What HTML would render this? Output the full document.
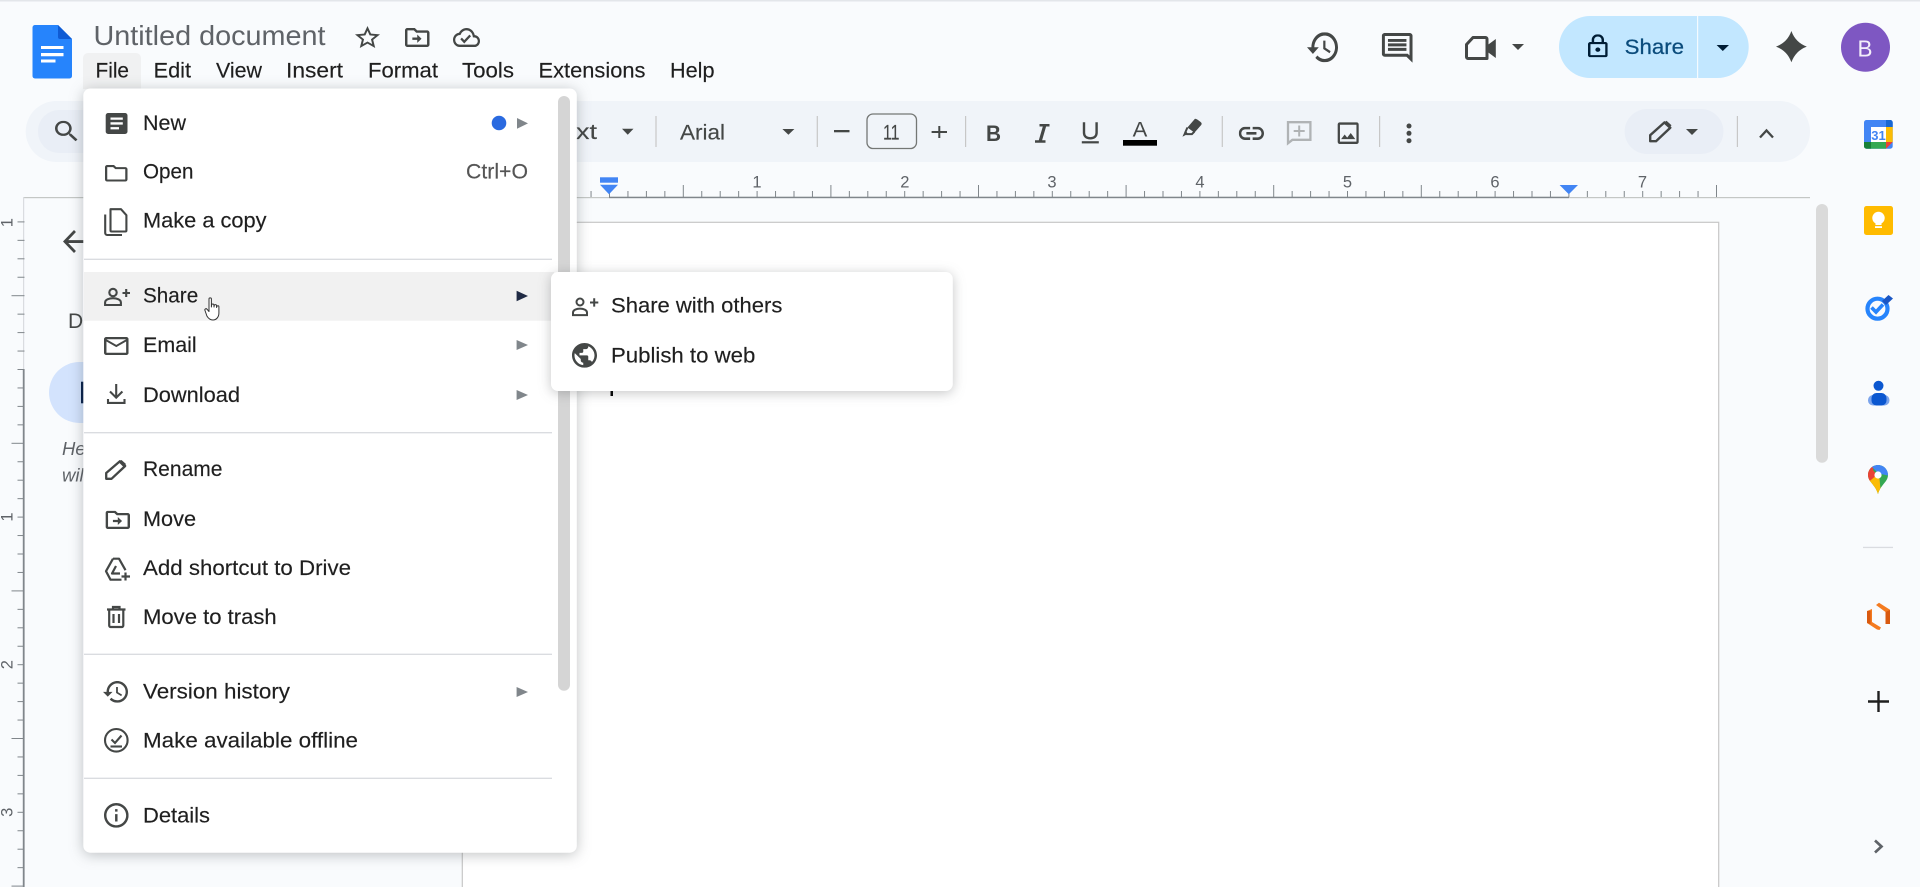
<!DOCTYPE html>
<html lang="en">
<head>
<meta charset="utf-8">
<title>Untitled document</title>
<style>
html,body{margin:0;padding:0;width:1920px;height:887px;overflow:hidden;background:#f9fbfd}
svg{display:block}
#root{filter:blur(.3px)}
text{font-family:"Liberation Sans",Arial,sans-serif;fill:#1f1f1f}
.m{font-size:21px;stroke:#1f1f1f;stroke-width:.15px}
.tb{font-size:21px;fill:#444746;stroke:#444746;stroke-width:.15px}
.r{font-size:16.5px;fill:#5f6368;text-anchor:middle}
.sep{stroke:#c7c7c7;stroke-width:1.2}
.hr{stroke:#dadce0;stroke-width:1.3}
</style>
</head>
<body>
<svg id="root" xmlns="http://www.w3.org/2000/svg" width="1920" height="887" viewBox="0 0 1920 887">
<defs>
<pattern id="hticks" patternUnits="userSpaceOnUse" x="609" y="185" width="147.6" height="12">
<path fill="#80868b" d="M0 6h1v6H0zM18.45 6h1v6h-1zM36.9 6h1v6h-1zM55.35 6h1v6h-1zM73.8 0h1v12h-1zM92.25 6h1v6h-1zM110.7 6h1v6h-1zM129.15 6h1v6h-1z"/>
</pattern>
<pattern id="vticks" patternUnits="userSpaceOnUse" x="11.5" y="369" width="13" height="147.6">
<path fill="#80868b" d="M6 0h7v1H6zM6 18.45h7v1H6zM6 36.9h7v1H6zM6 55.35h7v1H6zM0 73.8h13v1H0zM6 92.25h7v1H6zM6 110.7h7v1H6zM6 129.15h7v1H6z"/>
</pattern>
<clipPath id="pin"><path d="M1878 465c-5.5 0-10 4.4-10 10 0 7 7 9 10 19 3-10 10-12 10-19 0-5.6-4.5-10-10-10z"/></clipPath>
</defs>

<!-- base -->
<rect width="1920" height="887" fill="#f9fbfd"/>
<rect width="1920" height="1.5" fill="#e3e6ea"/>

<!-- docs logo -->
<path fill="#2684fc" d="M35 25h23l14 14v37a2.5 2.5 0 0 1-2.5 2.5H35a2.500 2.500 0 0 1-2.500-2.500V27.500A2.500 2.500 0 0 1 35 25z"/>
<path fill="#0f5bd4" d="M58 25l14 14H60a2 2 0 0 1-2-2z"/>
<path fill="#fff" d="M41 46h22.500v3H41zM41 53h22.500v3.300H41zM41 59.500h14.500v3H41z"/>

<!-- title row -->
<text x="93.500" y="45" font-size="28" style="fill:#5f6368" textLength="232" lengthAdjust="spacingAndGlyphs">Untitled document</text>
<svg x="355" y="26" width="25" height="22" viewBox="2 2 20 19" preserveAspectRatio="none"><path fill="#444746" d="M22 9.240l-7.190-.620L12 2 9.190 8.630 2 9.240l5.460 4.730L5.820 21 12 17.270 18.180 21l-1.630-7.030L22 9.240zM12 15.400l-3.760 2.270 1-4.280-3.320-2.880 4.380-.380L12 6.100l1.710 4.040 4.380.380-3.320 2.880 1 4.280L12 15.400z"/></svg>
<svg x="405" y="28" width="24.500" height="19" viewBox="2 4 20 16" preserveAspectRatio="none"><path fill="#444746" d="M20 6h-8l-2-2H4c-1.100 0-2 .900-2 2v12c0 1.100.900 2 2 2h16c1.100 0 2-.900 2-2V8c0-1.100-.900-2-2-2zm0 12H4V6h5.170l2 2H20v10zm-8-4H8v-2h4v-2.500l3.500 3.500-3.500 3.500V14z"/></svg>
<svg x="453" y="28" width="27" height="19" viewBox="0 4 24 16" preserveAspectRatio="none"><path fill="#444746" d="M19.350 10.040C18.670 6.590 15.640 4 12 4 9.110 4 6.600 5.640 5.350 8.040 2.340 8.360 0 10.910 0 14c0 3.310 2.690 6 6 6h13c2.760 0 5-2.240 5-5 0-2.640-2.050-4.780-4.650-4.960zM19 18H6c-2.210 0-4-1.790-4-4 0-2.050 1.530-3.760 3.560-3.970l1.070-.110.500-.950C8.080 7.140 9.940 6 12 6c2.620 0 4.880 1.860 5.390 4.430l.300 1.500 1.530.110c1.560.100 2.780 1.410 2.780 2.960 0 1.650-1.350 3-3 3zm-9-3.820l-2.090-2.090L6.500 13.500 10 17l6.010-6.010-1.410-1.410z"/></svg>

<!-- menubar -->
<path fill="#f0f1f2" d="M83 89V58a5 5 0 0 1 5-5h48a5 5 0 0 1 5 5v31z"/>
<text class="m" x="95.500" y="77.500" textLength="33.500" lengthAdjust="spacingAndGlyphs">File</text>
<text class="m" x="153.600" y="77.500" textLength="37.400" lengthAdjust="spacingAndGlyphs">Edit</text>
<text class="m" x="216" y="77.500" textLength="46" lengthAdjust="spacingAndGlyphs">View</text>
<text class="m" x="286" y="77.500" textLength="57" lengthAdjust="spacingAndGlyphs">Insert</text>
<text class="m" x="368" y="77.500" textLength="70" lengthAdjust="spacingAndGlyphs">Format</text>
<text class="m" x="462" y="77.500" textLength="52" lengthAdjust="spacingAndGlyphs">Tools</text>
<text class="m" x="538.500" y="77.500" textLength="107" lengthAdjust="spacingAndGlyphs">Extensions</text>
<text class="m" x="670" y="77.500" textLength="44.500" lengthAdjust="spacingAndGlyphs">Help</text>

<!-- top-right actions -->
<svg x="1307" y="32.300" width="31" height="30" viewBox="1 3 21 18" preserveAspectRatio="none"><path fill="#444746" d="M13 3c-4.970 0-9 4.030-9 9H1l3.890 3.890.070.140L9 12H6c0-3.870 3.130-7 7-7s7 3.130 7 7-3.130 7-7 7c-1.930 0-3.680-.790-4.940-2.060l-1.420 1.420C8.270 19.990 10.510 21 13 21c4.970 0 9-4.030 9-9s-4.030-9-9-9zm-1 5v5l4.280 2.540.720-1.210-3.500-2.080V8H12z"/></svg>
<svg x="1381.800" y="33" width="30.800" height="29.700" viewBox="2 2 20 20" preserveAspectRatio="none"><path fill="#444746" d="M21.990 4c0-1.100-.890-2-1.990-2H4c-1.100 0-2 .900-2 2v12c0 1.100.900 2 2 2h14l4 4-.010-18zM20 4v13.170L18.830 16H4V4h16zM6 12h12v2H6zm0-3h12v2H6zm0-3h12v2H6z"/></svg>
<path fill="none" stroke="#444746" stroke-width="3" stroke-linejoin="round" d="M1466.500 44.500l6.500-7h12.500a1.500 1.500 0 0 1 1.500 1.500v19.500h-19a1.500 1.500 0 0 1-1.500-1.500z"/>
<path fill="#444746" d="M1487 45.500l8.800-6.500v19l-8.800-6.500z"/>
<path fill="#444746" d="M1512 44h12l-6 6z"/>

<rect x="1559" y="16" width="189.700" height="62" rx="31" fill="#c2e7ff"/>
<rect x="1697" y="16" width="1.200" height="62" fill="#f4fbff"/>
<svg x="1588" y="34.300" width="19.700" height="23" viewBox="4 1 16 21" preserveAspectRatio="none"><path fill="#001d35" d="M18 8h-1V6c0-2.760-2.240-5-5-5S7 3.240 7 6v2H6c-1.100 0-2 .900-2 2v10c0 1.100.900 2 2 2h12c1.100 0 2-.900 2-2V10c0-1.100-.900-2-2-2zM9 6c0-1.660 1.340-3 3-3s3 1.340 3 3v2H9V6zm9 14H6V10h12v10zm-6-3c1.100 0 2-.900 2-2s-.900-2-2-2-2 .900-2 2 .900 2 2 2z"/></svg>
<text x="1624.600" y="54" font-size="21" style="fill:#0b4c7c;stroke:#0b4c7c;stroke-width:.25px" textLength="59.400" lengthAdjust="spacingAndGlyphs">Share</text>
<path fill="#001d35" d="M1716.600 45h12.400l-6.200 6z"/>
<path fill="#444746" d="M1791.400 31Q1795.500 42.500 1806.800 46.600Q1795.500 50.800 1791.400 62.300Q1787.300 50.800 1776 46.600Q1787.300 42.500 1791.400 31z"/>
<circle cx="1865.500" cy="47.300" r="24.500" fill="#7e57c2"/>
<text x="1857.500" y="56.300" font-size="23.500" style="fill:#f3eefa" textLength="15" lengthAdjust="spacingAndGlyphs">B</text>

<!-- toolbar -->
<rect x="25.700" y="101" width="1784.300" height="61" rx="30.500" fill="#f0f4f9"/>
<rect x="38" y="110" width="120" height="43" rx="21" fill="#e9eef6"/>
<svg x="55" y="120.700" width="22.500" height="20.500" viewBox="3 3 17.500 17.500" preserveAspectRatio="none"><path fill="#444746" d="M15.500 14h-.790l-.280-.270C15.410 12.590 16 11.110 16 9.500 16 5.910 13.090 3 9.500 3S3 5.910 3 9.500 5.910 16 9.500 16c1.610 0 3.090-.590 4.230-1.570l.270.280v.790l5 4.990L20.490 19l-4.990-5zm-6 0C7.010 14 5 11.990 5 9.500S7.010 5 9.500 5 14 7.010 14 9.500 11.990 14 9.500 14z"/></svg>
<text class="tb" x="573" y="139" text-anchor="end">Normal te</text>
<text class="tb" x="576" y="139" textLength="21" lengthAdjust="spacingAndGlyphs">xt</text>
<path fill="#444746" d="M622 128.700h11.500l-5.750 6z"/>
<line class="sep" x1="656" y1="116" x2="656" y2="147"/>
<text class="tb" x="680" y="139.300" textLength="45" lengthAdjust="spacingAndGlyphs">Arial</text>
<path fill="#444746" d="M782.400 129h12l-6 5.700z"/>
<line class="sep" x1="817.300" y1="116" x2="817.300" y2="147"/>
<rect x="834" y="130" width="15.500" height="2.300" fill="#444746"/>
<rect x="867" y="114" width="49.500" height="34.500" rx="6" fill="none" stroke="#747775" stroke-width="1.300"/>
<text class="tb" x="883" y="139.300" textLength="16.500" lengthAdjust="spacingAndGlyphs">11</text>
<path fill="#444746" d="M931.600 131h6.700v-5h2v5h6.700v2h-6.700v5h-2v-5h-6.700z"/>
<line class="sep" x1="965.600" y1="116" x2="965.600" y2="147"/>
<text x="986" y="141" font-size="22.500" font-weight="bold" style="fill:#444746" textLength="15" lengthAdjust="spacingAndGlyphs">B</text>
<path fill="#444746" d="M1039.500 124h10v2.500h-3.400l-4 13.700h3.400v2.500h-10.500v-2.500h3.800l4-13.700h-3.300z"/>
<path fill="none" stroke="#444746" stroke-width="2.400" d="M1084 122.300v10.500c0 3.500 2.400 5.500 6.300 5.500s6.300-2 6.300-5.500v-10.500"/>
<rect x="1081.800" y="141.200" width="17" height="2.200" fill="#444746"/>
<text x="1132.700" y="136.700" font-size="21" style="fill:#444746" textLength="14.700" lengthAdjust="spacingAndGlyphs">A</text>
<rect x="1123" y="140" width="34" height="5.700" fill="#000"/>
<svg x="1181.400" y="118.300" width="21.100" height="18.400" viewBox="0 0 21 18" preserveAspectRatio="none"><path fill="none" stroke="#444746" stroke-width="2" d="M6 9L4 13.500 5.500 15.500H10.500L13 13"/><path fill="#444746" d="M13.500 0.500c1 0 2 .6 3 1.200l2.500 1.800c1.200.9 1.500 2 .7 3.100L13 14 6 9zM1 18l2-4.500 3 2z"/></svg>
<line class="sep" x1="1222.300" y1="116" x2="1222.300" y2="147"/>
<svg x="1238.800" y="126.700" width="25.200" height="13.300" viewBox="2 7 20 10" preserveAspectRatio="none"><path fill="#444746" d="M17 7h-4v2h4c1.650 0 3 1.350 3 3s-1.350 3-3 3h-4v2h4c2.760 0 5-2.240 5-5s-2.240-5-5-5zm-6 8H7c-1.650 0-3-1.350-3-3s1.350-3 3-3h4V7H7c-2.760 0-5 2.240-5 5s2.240 5 5 5h4v-2zm-3-4h8v2H8z"/></svg>
<path fill="none" stroke="#b0b3b5" stroke-width="2.300" d="M1288 122.200h22.400v17.600h-18l-4.400 3.500z"/>
<path fill="#b0b3b5" d="M1298.200 125.500h2v4.500h4.500v2h-4.500v4.500h-2v-4.500h-4.500v-2h4.500z"/>
<svg x="1337.600" y="122.300" width="21.200" height="21.700" viewBox="3 3 18 18" preserveAspectRatio="none"><path fill="#444746" d="M19 5v14H5V5h14m0-2H5c-1.100 0-2 .900-2 2v14c0 1.100.900 2 2 2h14c1.100 0 2-.900 2-2V5c0-1.100-.900-2-2-2zm-4.860 8.860l-3 3.870L9 13.140 6 17h12l-3.860-5.140z"/></svg>
<line class="sep" x1="1379.600" y1="116" x2="1379.600" y2="147"/>
<circle cx="1409" cy="126" r="2.500" fill="#444746"/><circle cx="1409" cy="133.300" r="2.500" fill="#444746"/><circle cx="1409" cy="140.700" r="2.500" fill="#444746"/>
<rect x="1624.600" y="109" width="98.900" height="45" rx="22.500" fill="#e9eef6"/>
<g fill="none" stroke="#444746" stroke-width="2.400" stroke-linejoin="round"><path d="M1650.200 141.200v-6l14.300-12.800 5.800 5.300-14.300 13.500z"/></g>
<path fill="#444746" d="M1663.500 123.300l3-2.500 5 4.500-2.500 3z"/>
<path fill="#444746" d="M1686 129h12l-6 6z"/>
<line class="sep" x1="1737.400" y1="116" x2="1737.400" y2="147"/>
<path fill="none" stroke="#444746" stroke-width="2.300" d="M1760 137.500l6.500-7 6.500 7"/>

<!-- horizontal ruler -->
<rect x="23" y="197" width="586" height="1.200" fill="#c4c7c5"/>
<rect x="609" y="196.700" width="960" height="1.500" fill="#80868b"/>
<rect x="1569" y="197" width="241" height="1.200" fill="#c4c7c5"/>
<rect x="590" y="185" width="1128" height="12" fill="url(#hticks)"/>
<text class="r" x="757" y="187.300">1</text>
<text class="r" x="904.800" y="187.300">2</text>
<text class="r" x="1052" y="187.300">3</text>
<text class="r" x="1200" y="187.300">4</text>
<text class="r" x="1347.500" y="187.300">5</text>
<text class="r" x="1495" y="187.300">6</text>
<text class="r" x="1642.500" y="187.300">7</text>
<rect x="600" y="177.300" width="18" height="5.400" fill="#4285f4"/>
<path fill="#4285f4" d="M600 184.700h18l-9 9.600z"/>
<path fill="#4285f4" d="M1559.600 185H1578l-9.200 9.300z"/>

<!-- page -->
<rect x="462.300" y="222.300" width="1256.400" height="670" fill="#fff" stroke="#c7c7c7" stroke-width="1.200"/>
<rect x="610.500" y="372" width="2.500" height="24" fill="#000"/>

<!-- vertical ruler -->
<rect x="23" y="197" width="1.200" height="172.500" fill="#dadce0"/>
<rect x="22.800" y="369" width="1.800" height="518" fill="#80868b"/>
<rect x="11.500" y="221" width="13" height="666" fill="url(#vticks)"/>
<text class="r" transform="translate(12.500 222.700) rotate(-90)" y="0">1</text>
<text class="r" transform="translate(12.500 517) rotate(-90)" y="0">1</text>
<text class="r" transform="translate(12.500 664.700) rotate(-90)" y="0">2</text>
<text class="r" transform="translate(12.500 812.300) rotate(-90)" y="0">3</text>

<!-- left pane, mostly behind menu -->
<svg x="63" y="230" width="22" height="23" viewBox="4 4 16 16" preserveAspectRatio="none"><path fill="#444746" d="M20 11H7.830l5.590-5.590L12 4l-8 8 8 8 1.410-1.410L7.830 13H20v-2z"/></svg>
<text x="68" y="328" font-size="21" style="fill:#444746">Document tabs</text>
<rect x="49" y="362" width="300" height="61" rx="30.500" fill="#d3e3fd"/>
<rect x="81" y="381.700" width="4" height="21.600" fill="#041e49"/>
<text x="62" y="455" font-size="18.500" font-style="italic" style="fill:#5f6368">Headings you add</text>
<text x="62" y="481.700" font-size="18.500" font-style="italic" style="fill:#5f6368">will appear here.</text>

<!-- right scrollbar & side panel -->
<rect x="1816" y="204" width="12" height="258.700" rx="6" fill="#dadada"/>
<rect x="1864" y="120" width="28.700" height="28.700" rx="2.500" fill="#4285f4"/>
<path fill="#1967d2" d="M1886 120h4.200a2.500 2.500 0 0 1 2.500 2.500V127H1886z"/>
<rect x="1886" y="127" width="6.700" height="15" fill="#fbbc04"/>
<rect x="1871" y="142" width="15" height="6.700" fill="#34a853"/>
<path fill="#188038" d="M1864 142h7v6.700h-4.500a2.500 2.500 0 0 1-2.500-2.500z"/>
<path fill="#ea4335" d="M1886 148.700V142h6.700z"/>
<rect x="1871" y="127" width="15" height="15" fill="#fff"/>
<text x="1878.500" y="140" font-size="13" font-weight="bold" text-anchor="middle" style="fill:#4285f4">31</text>
<rect x="1864" y="206" width="29" height="29" rx="2.500" fill="#ffbb00"/>
<circle cx="1878.500" cy="218" r="6.200" fill="#fff"/>
<rect x="1875.500" y="222" width="6" height="3" fill="#fff"/>
<rect x="1875" y="226.200" width="7" height="1.800" fill="#fff"/>
<circle cx="1877.500" cy="308.700" r="10" fill="none" stroke="#2684fc" stroke-width="4.200"/>
<path fill="none" stroke="#2684fc" stroke-width="3.600" d="M1871.500 307.500l4.500 4.500 7-7.500"/>
<path fill="#1a56c4" d="M1882 301l6.500-6 4.500 3.500-7 6.500z"/>
<rect x="1868" y="395" width="21.500" height="10.500" rx="5" fill="#7ba4ec"/>
<rect x="1871.500" y="393" width="15" height="12.500" rx="5" fill="#0b57d0"/>
<circle cx="1878.500" cy="385.800" r="5" fill="#0b57d0"/>
<g clip-path="url(#pin)">
<rect x="1868" y="465" width="20" height="30" fill="#34a853"/>
<path fill="#fbbc04" d="M1868 480l11-7 2 22h-13z"/>
<path fill="#ea4335" d="M1866 465h8l-1 5 4 5-11 9z"/>
<path fill="#4285f4" d="M1870 465h20v11l-9-2-4-2z"/>
</g>
<circle cx="1878" cy="475" r="3.600" fill="#fff"/>
<rect x="1863" y="546.800" width="30" height="1.300" fill="#dadce0"/>
<path fill="#f47b20" d="M1876 605l3-2.300 11 7v14h-4.500v-11.700z"/>
<path fill="#d9590f" d="M1885.500 612v12h4.500v-14z"/>
<path fill="#f47b20" d="M1867 611l5-2v13l9 5.500-1.500 2.500-2.500-.500-10-6.500z"/>
<path fill="#d9590f" d="M1867 611h3.500v13l-3.500-1z"/>
<path fill="#1f1f1f" d="M1868 700.300h9.300V691h2.400v9.300h9.300v2.400h-9.300v9.300h-2.400v-9.300h-9.300z"/>
<path fill="none" stroke="#5f6368" stroke-width="2.700" d="M1875 840.500l6.500 6-6.500 6"/>

<!-- file menu -->
<rect x="83.300" y="88.500" width="493.500" height="764.200" rx="7" fill="#fff" style="filter:drop-shadow(0 2px 7px rgba(60,64,67,.32))"/>
<rect x="558" y="96" width="12" height="594.700" rx="6" fill="#d5d5d5"/>
<rect x="84" y="272" width="470" height="48.700" fill="#f1f1f1"/>
<line class="hr" x1="84" y1="259.300" x2="552" y2="259.300"/>
<line class="hr" x1="84" y1="432.700" x2="552" y2="432.700"/>
<line class="hr" x1="84" y1="654.300" x2="552" y2="654.300"/>
<line class="hr" x1="84" y1="778.300" x2="552" y2="778.300"/>

<text class="m" x="143" y="130" textLength="43" lengthAdjust="spacingAndGlyphs">New</text>
<text class="m" x="143" y="178.700" textLength="50.400" lengthAdjust="spacingAndGlyphs">Open</text>
<text class="m" x="466" y="178.700" textLength="62" lengthAdjust="spacingAndGlyphs" style="fill:#555;stroke:#555">Ctrl+O</text>
<text class="m" x="143" y="227.700" textLength="123.500" lengthAdjust="spacingAndGlyphs">Make a copy</text>
<text class="m" x="143" y="302.700" textLength="55.200" lengthAdjust="spacingAndGlyphs">Share</text>
<text class="m" x="143" y="352" textLength="53.700" lengthAdjust="spacingAndGlyphs">Email</text>
<text class="m" x="143" y="402" textLength="97" lengthAdjust="spacingAndGlyphs">Download</text>
<text class="m" x="143" y="476" textLength="79.500" lengthAdjust="spacingAndGlyphs">Rename</text>
<text class="m" x="143" y="526" textLength="53" lengthAdjust="spacingAndGlyphs">Move</text>
<text class="m" x="143" y="575" textLength="208" lengthAdjust="spacingAndGlyphs">Add shortcut to Drive</text>
<text class="m" x="143" y="624" textLength="133.700" lengthAdjust="spacingAndGlyphs">Move to trash</text>
<text class="m" x="143" y="698.300" textLength="147" lengthAdjust="spacingAndGlyphs">Version history</text>
<text class="m" x="143" y="747.700" textLength="215" lengthAdjust="spacingAndGlyphs">Make available offline</text>
<text class="m" x="143" y="822.700" textLength="67" lengthAdjust="spacingAndGlyphs">Details</text>

<!-- menu arrows -->
<circle cx="499" cy="123" r="7.300" fill="#2a6ae0"/>
<path fill="#80868b" d="M517 118v10.700l11-5.350z"/>
<path fill="#1f2a44" d="M516.600 290.700v10.600l11.400-5.300z"/>
<path fill="#80868b" d="M516.600 340v10l11.400-5z"/>
<path fill="#80868b" d="M516.600 390v10l11.400-5z"/>
<path fill="#80868b" d="M516.600 687v10l11.400-5z"/>

<!-- menu icons -->
<rect x="105.700" y="113" width="21.800" height="21" rx="2.500" fill="#444746"/>
<path fill="#fff" d="M110.500 117.500h12.300v2.300h-12.300zM110.500 122.300h12.300v2.300h-12.300zM110.500 127.100h8.500v2.300h-8.500z"/>
<svg x="105" y="165" width="22.500" height="16.500" viewBox="2 4 20 16" preserveAspectRatio="none"><path fill="#444746" d="M9.170 6l2 2H20v10H4V6h5.170M10 4H4c-1.100 0-1.990.900-1.990 2L2 18c0 1.100.900 2 2 2h16c1.100 0 2-.900 2-2V8c0-1.100-.900-2-2-2h-8l-2-2z"/></svg>
<path fill="none" stroke="#444746" stroke-width="2.100" stroke-linejoin="round" d="M110.500 209.200h10.500l5.400 6v15.300a1 1 0 0 1-1 1H111.500a1 1 0 0 1-1-1z"/>
<path fill="none" stroke="#444746" stroke-width="2.100" d="M105.200 214.500v18.500a2 2 0 0 0 2 2h14.800"/>
<!-- person add -->
<g fill="none" stroke="#444746" stroke-width="2.100">
<circle cx="113" cy="292.500" r="3.700"/>
<path d="M105.100 305v-2.500c0-2.700 3.800-4.300 7.900-4.300s7.900 1.600 7.900 4.300v2.500z"/>
<path d="M122.500 293h7.500M126.200 289v8"/>
</g>
<svg x="104" y="337" width="24.600" height="18" viewBox="2 4 20 16" preserveAspectRatio="none"><path fill="#444746" d="M22 6c0-1.100-.900-2-2-2H4c-1.100 0-2 .900-2 2v12c0 1.100.900 2 2 2h16c1.100 0 2-.900 2-2V6zm-2 0l-8 5-8-5h16zm0 12H4V8l8 5 8-5v10z"/></svg>
<path fill="none" stroke="#444746" stroke-width="2.100" d="M116.200 384v13M110 391.500l6.200 6.200 6.200-6.200"/>
<path fill="none" stroke="#444746" stroke-width="2.100" d="M108 399v3.900h16.500V399"/>
<g fill="none" stroke="#444746" stroke-width="2.300" stroke-linejoin="round"><path d="M106.200 478.800v-5.800l13.700-11.800 5.300 4.800-13.700 12.800z"/></g>
<path fill="#444746" d="M118.500 462l3-2 4.500 4-2.500 3z"/>
<svg x="105.600" y="510.700" width="24.400" height="18.300" viewBox="2 4 20 16" preserveAspectRatio="none"><path fill="#444746" d="M20 6h-8l-2-2H4c-1.100 0-2 .900-2 2v12c0 1.100.900 2 2 2h16c1.100 0 2-.900 2-2V8c0-1.100-.900-2-2-2zm0 12H4V6h5.170l2 2H20v10zm-8-4H8v-2h4v-2.500l3.500 3.500-3.500 3.500V14z"/></svg>
<!-- add shortcut -->
<g fill="none" stroke="#444746" stroke-width="2.200" stroke-linejoin="round">
<path d="M113 558.700h6l6.500 11.500M113 558.700l-7 12.500 4.500 8.500h11"/>
<path d="M116 566l-4 7.500h8"/>
<path d="M125.500 572.500v8M121.500 576.500h8.500"/>
</g>
<!-- trash -->
<g fill="none" stroke="#444746" stroke-width="2.200">
<path d="M109.200 610.500v15a1.500 1.500 0 0 0 1.500 1.500h11.100a1.500 1.500 0 0 0 1.500-1.500v-15"/>
<path d="M107 609.500h18.500M113 609v-2h6.500v2"/>
<path d="M113.500 614v9M119 614v9"/>
</g>
<svg x="103" y="681" width="25" height="21.700" viewBox="1 3 21 18" preserveAspectRatio="none"><path fill="#444746" d="M13 3c-4.970 0-9 4.030-9 9H1l3.890 3.890.070.140L9 12H6c0-3.870 3.130-7 7-7s7 3.130 7 7-3.130 7-7 7c-1.930 0-3.680-.790-4.940-2.060l-1.420 1.420C8.270 19.990 10.510 21 13 21c4.970 0 9-4.030 9-9s-4.030-9-9-9zm-1 5v5l4.280 2.540.720-1.210-3.500-2.080V8H12z"/></svg>
<g fill="none" stroke="#444746" stroke-width="2.100">
<circle cx="116.300" cy="740.300" r="11.300"/>
<path d="M111.500 739.500l3.500 3.500 6.500-7.500"/>
<path d="M110.500 746.500h11.500"/>
</g>
<svg x="104" y="803" width="24.600" height="24.700" viewBox="2 2 20 20" preserveAspectRatio="none"><path fill="#444746" d="M11 7h2v2h-2zm0 4h2v6h-2zm1-9C6.480 2 2 6.480 2 12s4.480 10 10 10 10-4.480 10-10S17.520 2 12 2zm0 18c-4.410 0-8-3.590-8-8s3.590-8 8-8 8 3.590 8 8-3.590 8-8 8z"/></svg>

<!-- submenu -->
<rect x="551" y="272" width="401.800" height="119" rx="7" fill="#fff" style="filter:drop-shadow(0 2px 6px rgba(60,64,67,.3))"/>
<g fill="none" stroke="#444746" stroke-width="2">
<circle cx="580" cy="302" r="3.500"/>
<path d="M573 315.100v-2.500c0-2.500 3.500-4 7-4s7 1.500 7 4v2.500z"/>
<path d="M590 302.500h8.300M594.200 298.300v8.300"/>
</g>
<svg x="572" y="343" width="25" height="24.700" viewBox="2 2 20 20" preserveAspectRatio="none"><path fill="#444746" d="M12 2C6.480 2 2 6.480 2 12s4.480 10 10 10 10-4.480 10-10S17.520 2 12 2zm-1 17.930c-3.950-.490-7-3.850-7-7.930 0-.620.080-1.210.210-1.790L9 15v1c0 1.100.900 2 2 2v1.930zm6.900-2.540c-.260-.810-1-1.390-1.900-1.390h-1v-3c0-.550-.450-1-1-1H8v-2h2c.550 0 1-.450 1-1V7h2c1.100 0 2-.900 2-2v-.410c2.930 1.190 5 4.060 5 7.410 0 2.080-.800 3.970-2.100 5.390z"/></svg>
<text class="m" x="611" y="312.700" textLength="171.400" lengthAdjust="spacingAndGlyphs">Share with others</text>
<text class="m" x="611" y="362.700" textLength="144.300" lengthAdjust="spacingAndGlyphs">Publish to web</text>

<!-- hand cursor -->
<svg x="204" y="297" width="17" height="24" viewBox="0 0 17 24"><path fill="#fff" stroke="#333" stroke-width="1" stroke-linejoin="round" d="M5 2c0-1.500 2.400-1.500 2.400 0v8l.2-2c.2-1.300 2.200-1.300 2.300 0l.1 2 .2-1.500c.2-1.200 2.200-1.200 2.300 0l.1 2 .3-1c.3-1 2-1 2 .2V16c0 4-2.500 7-6 7-3 0-4.500-1.500-6-4L1 13.500c-.7-1.300 1-2.500 2-1.300L5 14.500z"/></svg>
</svg>
</body>
</html>
